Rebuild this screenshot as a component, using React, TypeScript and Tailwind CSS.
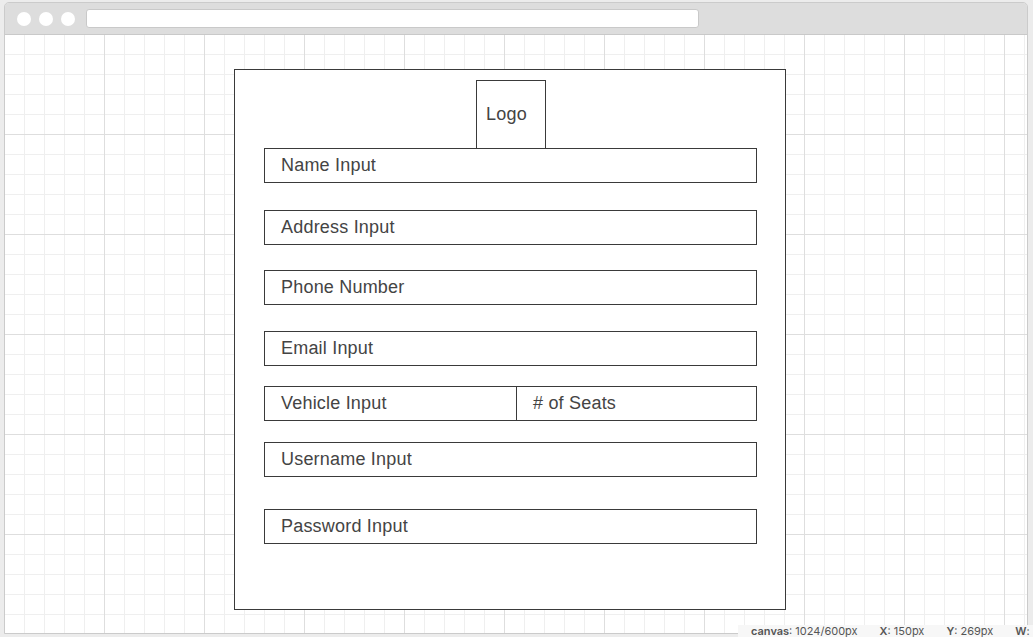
const fields = [
  { label: "Name Input", mt: "mt-0" },
  { label: "Address Input", mt: "mt-[27px]" },
  { label: "Phone Number", mt: "mt-[25px]" },
  { label: "Email Input", mt: "mt-[26px]" },
];

function Field({ label, className = "" }: { label: string; className?: string }) {
  return (
    <div
      className={`h-[35px] w-[493px] border border-[#3a3a3a] pl-[16px] flex items-center text-[18px] tracking-[0.2px] text-[#444] ${className}`}
    >
      {label}
    </div>
  );
}

export default function App() {
  return (
    <div className="relative w-[1033px] h-[637px] overflow-hidden bg-[#ececec] pt-[2px] pl-[4px] font-['Liberation_Sans',Arial,sans-serif]">
      {/* browser frame */}
      <div className="w-[1024px] h-[632px] border border-[#cbcbcb] rounded-t-[5px] flex flex-col overflow-hidden">
        {/* top bar */}
        <div className="h-[32px] shrink-0 bg-[#dddddd] border-b border-[#c9c9c9] flex items-center pl-[12px]">
          <div className="flex gap-[8px]">
            <span className="w-[14px] h-[14px] rounded-full bg-white" />
            <span className="w-[14px] h-[14px] rounded-full bg-white" />
            <span className="w-[14px] h-[14px] rounded-full bg-white" />
          </div>
          <div className="ml-[11px] w-[613px] h-[19px] rounded-[3px] bg-white border border-[#c9c9c9]" />
        </div>

        {/* canvas */}
        <div className="flex-1 bg-white bg-[linear-gradient(to_right,#dedede_1px,transparent_1px),linear-gradient(to_bottom,#dedede_1px,transparent_1px),linear-gradient(to_right,#efefef_1px,transparent_1px),linear-gradient(to_bottom,#efefef_1px,transparent_1px)] bg-size-[100px_100px,100px_100px,20px_20px,20px_20px] bg-position-[-1px_-1px] pt-[34px] pl-[229px]">
          {/* card */}
          <div className="w-[552px] h-[541px] bg-white border border-[#3a3a3a] pl-[29px] pt-[10px]">
            <div className="ml-[212px] w-[70px] h-[68px] border-x border-t border-[#3a3a3a] flex items-center pl-[9px] text-[18px] tracking-[0.2px] text-[#444]">
              Logo
            </div>
            {fields.map((f) => (
              <Field key={f.label} label={f.label} className={f.mt} />
            ))}

            {/* vehicle + seats */}
            <div className="mt-[20px] h-[35px] w-[493px] border border-[#3a3a3a] flex text-[18px] tracking-[0.2px] text-[#444]">
              <div className="w-[252px] border-r border-[#3a3a3a] pl-[16px] flex items-center">Vehicle Input</div>
              <div className="flex-1 pl-[16px] flex items-center"># of Seats</div>
            </div>

            <Field label="Username Input" className="mt-[21px]" />
            <Field label="Password Input" className="mt-[32px]" />
          </div>
        </div>
      </div>

      {/* status bar */}
      <div className="absolute left-[738px] top-[625px] w-[295px] h-[12px] bg-[#f7f7f7] flex items-center gap-[22px] pl-[13px] text-[11px] leading-none text-[#555] font-['Inter',sans-serif] whitespace-nowrap">
        <span><b className="font-semibold">canvas</b>: 1024/600px</span>
        <span><b className="font-semibold">X</b>: 150px</span>
        <span><b className="font-semibold">Y</b>: 269px</span>
        <span><b className="font-semibold">W</b>:</span>
      </div>
    </div>
  );
}
